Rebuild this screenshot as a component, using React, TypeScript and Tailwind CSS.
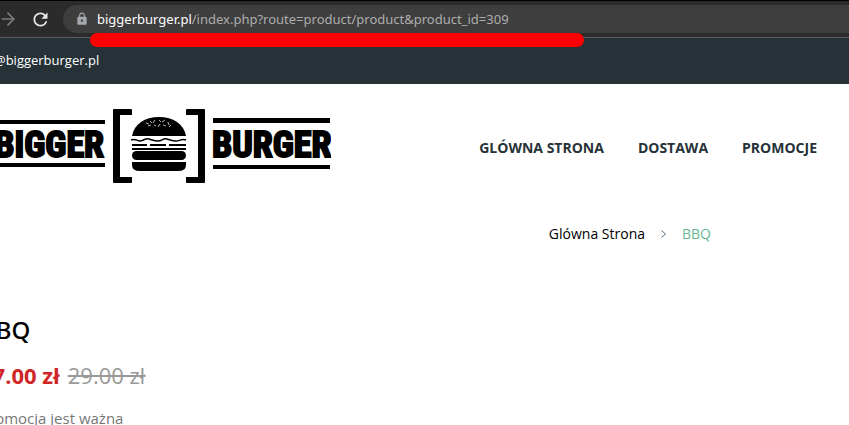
import { ArrowRight } from 'lucide-react'
import { MdLock, MdRefresh } from 'react-icons/md'

const navItems = [
  { label: 'GLÓWNA STRONA', href: '#home' },
  { label: 'DOSTAWA', href: '#delivery' },
  { label: 'PROMOCJE', href: '#promo' },
]

function BrowserBar() {
  return (
    <div className="relative flex h-[38px] items-center border-t border-b border-t-black border-b-[#5b5d5f] bg-[#2b2b2b]">
      <button type="button" aria-label="Forward" className="text-[#7d7d7d]">
        <ArrowRight className="-ml-0.5 h-5 w-5" strokeWidth={2} />
      </button>
      <button type="button" aria-label="Reload" className="ml-3 text-[#e6e6e6]">
        <MdRefresh className="h-[21px] w-[21px]" />
      </button>
      <div className="ml-3 flex h-7 flex-1 items-center rounded-l-full bg-[#3e3e3e] pt-0.5 pl-3 font-['Noto_Sans','Open_Sans',sans-serif] text-[13px]">
        <MdLock className="mr-2 mb-0.5 h-[14px] w-[14px] text-[#a5a8ad]" />
        <span className="text-white">biggerburger.pl</span>
        <span className="text-[#adadad]">/index.php?route=product/product&amp;product_id=309</span>
      </div>
      {/* Marker stroke under the address */}
      <div className="absolute top-8 left-[90px] h-[14px] w-[494px] rounded-full bg-[#ff0000]" />
    </div>
  )
}

function Logo() {
  return (
    <a href="#home" aria-label="Bigger Burger">
      <svg className="h-[74px] w-[331px]" viewBox="0 0 331 74" fill="#000">
        <rect x="0" y="11" width="105" height="4" />
        <rect x="0" y="54" width="105" height="4" />
        <text
          x="104"
          y="48"
          textAnchor="end"
          stroke="#000"
          strokeWidth="2"
          className="font-['Roboto_Condensed',Roboto,sans-serif] text-[36px] font-bold"
        >
          BIGGER
        </text>
        <rect x="213" y="9" width="117" height="5" />
        <rect x="213" y="56" width="117" height="4" />
        <text
          x="212"
          y="48"
          stroke="#000"
          strokeWidth="2"
          className="font-['Roboto_Condensed',Roboto,sans-serif] text-[36px] font-bold"
        >
          BURGER
        </text>

        {/* Brackets */}
        <path d="M114 0H131Q132 0 132 1V6H120V68H132V73Q132 74 131 74H114Q113 74 113 73V1Q113 0 114 0Z" />
        <path d="M204 0H187Q186 0 186 1V6H198V68H186V73Q186 74 187 74H204Q205 74 205 73V1Q205 0 204 0Z" />

        {/* Burger */}
        <path d="M132 27C134 15 145 8 159 8S184 15 186 27Z" />
        <path
          d="M146 14l3 1M150 12l2 2M155 11l-2 3M159 11l2 2M165 11l-3 2M168 13l1 3M148 17l3-1M154 16l2 1M160 15l-2 3M163 16l3 1M169 18l2-2"
          stroke="#fff"
          strokeWidth=".7"
          fill="none"
        />
        <path
          d="M131 31C135 29 137 32 140 32S145 29 149 30S154 32 158 32S163 29 167 30S172 32 176 32S182 29 186 31"
          stroke="#000"
          strokeWidth="1.5"
          fill="none"
        />
        <path d="M132 35H147V37H132ZM150 35H166V37H150ZM169 35H186V37H169ZM132 39H186V41H132Z" />
        <rect x="132" y="42" width="54" height="9" rx="4.5" />
        <path d="M132 53H186V56Q186 62 178 62H140Q132 62 132 56Z" />
      </svg>
    </a>
  )
}

function Header() {
  return (
    <header>
      <div className="flex h-[46px] items-center bg-[#263238] text-[13px] text-white">
        <a href="#mail" className="-ml-1.5">@biggerburger.pl</a>
      </div>
      <div className="flex items-center justify-between pt-[25px] pr-8">
        <Logo />
        <nav className="flex gap-[34px] pt-1 text-sm font-bold text-[#263238]">
          {navItems.map((item) => (
            <a key={item.label} href={item.href}>{item.label}</a>
          ))}
        </nav>
      </div>
    </header>
  )
}

export default function App() {
  return (
    <div className="h-screen overflow-hidden bg-white font-['Open_Sans','Noto_Sans',sans-serif]">
      <BrowserBar />
      <Header />
      <main>
        <nav aria-label="Breadcrumb" className="mt-[41px] flex items-center justify-end pr-[138px] text-sm">
          <a href="#home" className="text-black">Glówna Strona</a>
          <svg className="mx-4 h-2 w-[5px]" viewBox="0 0 5 8" fill="none" stroke="#4f7187">
            <path d="M.5 .5L4.500 4L.5 7.500" />
          </svg>
          <span className="text-[#66b893]">BBQ</span>
        </nav>
        <section className="mt-[70px]">
          <h1 className="-ml-5 font-['Noto_Sans',sans-serif] text-2xl leading-8 font-medium text-black">BBQ</h1>
          <p className="mt-[13px] -ml-5 flex gap-2 text-[22px] leading-8">
            <span className="font-bold text-[#d02626]">17.00 zł</span>
            <del className="text-[#999999]">29.00 zł</del>
          </p>
          <p className="mt-[15px] -ml-5 text-[15px] leading-6 text-[#777777]">Promocja jest ważna</p>
        </section>
      </main>
    </div>
  )
}
